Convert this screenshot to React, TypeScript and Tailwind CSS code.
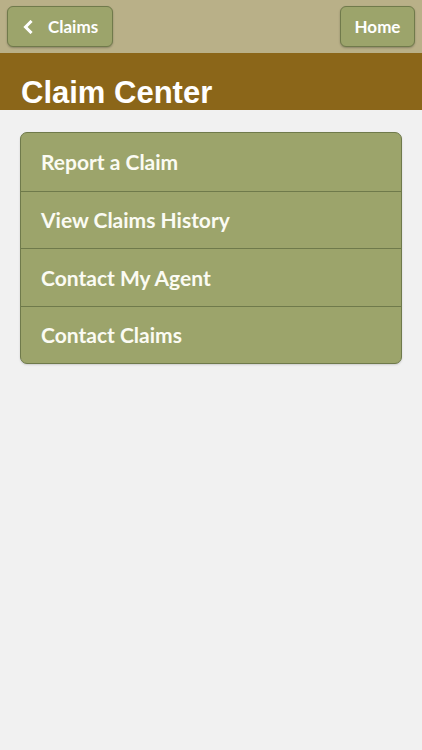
import React from "react";

export default function App() {
  const items = ["Report a Claim", "View Claims History", "Contact My Agent", "Contact Claims"];
  return (
    <div className="min-h-[750px] w-full bg-[#f1f1f1]" style={{ fontFamily: "Lato, 'Liberation Sans', sans-serif" }}>
      <div className="h-[53px] bg-[#b9b088] flex items-center justify-between px-[7px]">
        <div className="h-[41px] w-[106px] rounded-[6px] border border-[#707a4b] bg-[#9ca46b] shadow-[0_1px_2px_rgba(0,0,0,0.25)] flex items-center pl-[14px] gap-[14px] text-white font-bold text-[17px]">
          <svg width="12" height="14" viewBox="0 0 12 14">
            <path d="M8.5 2 L3.5 7 L8.5 12" stroke="white" strokeWidth="3" fill="none" strokeLinecap="square" />
          </svg>
          <span>Claims</span>
        </div>
        <div className="h-[41px] w-[75px] rounded-[6px] border border-[#707a4b] bg-[#9ca46b] shadow-[0_1px_2px_rgba(0,0,0,0.25)] flex items-center justify-center text-white font-bold text-[17px]">
          Home
        </div>
      </div>
      <div className="h-[57px] bg-[#8b6619] flex items-end pl-[21px]">
        <span className="text-white font-bold text-[31px] leading-[34px]" style={{ fontFamily: "'Liberation Sans', Arial, sans-serif" }}>
          Claim Center
        </span>
      </div>
      <div className="px-[20px] pt-[22px]">
        <div className="rounded-[7px] border border-[#6f7a4b] bg-[#9ca46b] overflow-hidden shadow-[0_1px_2px_rgba(0,0,0,0.15)]">
          {items.map((t, i) => (
            <div
              key={t}
              className={`h-[57.5px] flex items-center pl-[20px] text-[#fbfbf3] font-bold text-[21px] ${i > 0 ? "border-t border-[#6f7a4b]" : ""}`}
            >
              {t}
            </div>
          ))}
        </div>
      </div>
    </div>
  );
}
